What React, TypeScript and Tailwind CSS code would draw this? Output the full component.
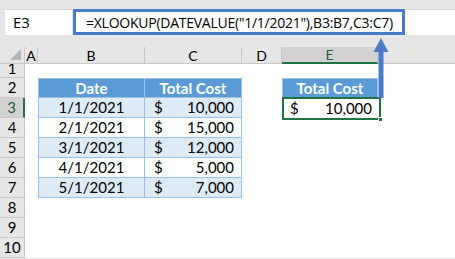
import React from "react";

const cellFont = { fontFamily: "Lato, 'Liberation Sans', sans-serif" };

const data: [string, string][] = [
  ["1/1/2021", "10,000"],
  ["2/1/2021", "15,000"],
  ["3/1/2021", "12,000"],
  ["4/1/2021", "5,000"],
  ["5/1/2021", "7,000"],
];

const rowHeights = [14, 20, 20, 20, 20, 20, 20, 20, 20, 20];

function ColHeader({ w, label, active }: { w: string; label: string; active?: boolean }) {
  return (
    <div
      className={`${w} flex h-full shrink-0 items-center justify-center border-r border-[#c9c9c9] text-[14px] ${
        active ? "border-b-2 border-b-[#217346] bg-[#d2d2d2] text-[#1d5c3a]" : "border-b border-b-[#c9c9c9] text-black"
      }`}
    >
      {label}
    </div>
  );
}

function BCell({ r }: { r: number }) {
  if (r === 2)
    return (
      <div className="flex h-full w-[107px] shrink-0 items-center justify-center border border-[#9bc2e6] bg-[#5b9bd5] text-[15px] font-bold text-white">
        Date
      </div>
    );
  if (r >= 3 && r <= 7)
    return (
      <div
        className={`flex h-full w-[107px] shrink-0 items-center justify-center border-x border-b border-[#9bc2e6] text-[15px] text-black ${
          r % 2 === 1 ? "bg-[#ddebf7]" : "bg-white"
        }`}
      >
        {data[r - 3][0]}
      </div>
    );
  return <div className="h-full w-[107px] shrink-0" />;
}

function CCell({ r }: { r: number }) {
  if (r === 2)
    return (
      <div className="flex h-full w-[97px] shrink-0 items-center justify-center border-y border-r border-[#9bc2e6] bg-[#5b9bd5] text-[15px] font-bold text-white">
        Total Cost
      </div>
    );
  if (r >= 3 && r <= 7)
    return (
      <div
        className={`flex h-full w-[97px] shrink-0 items-center justify-between border-r border-b border-[#9bc2e6] pl-[9px] pr-[7px] text-[15px] text-black ${
          r % 2 === 1 ? "bg-[#ddebf7]" : "bg-white"
        }`}
      >
        <span>$</span>
        <span>{data[r - 3][1]}</span>
      </div>
    );
  return <div className="h-full w-[97px] shrink-0" />;
}

function ECell({ r }: { r: number }) {
  if (r === 2)
    return (
      <div className="flex h-full w-[96px] shrink-0 items-center justify-center border border-[#9bc2e6] bg-[#5b9bd5] text-[15px] font-bold text-white">
        Total Cost
      </div>
    );
  if (r === 3)
    return (
      <div className="relative flex h-full w-[96px] shrink-0 items-center justify-between pl-[8px] pr-[6px] text-[15px] text-black">
        <span>$</span>
        <span>10,000</span>
        <div className="absolute -top-[1px] left-0 -right-[3px] -bottom-[2px] border-2 border-[#217346]" />
        <div className="absolute -right-[5px] -bottom-[4px] h-[5px] w-[5px] border border-white bg-[#217346]" />
      </div>
    );
  return <div className="h-full w-[96px] shrink-0" />;
}

export default function App() {
  return (
    <div className="relative h-[259px] w-[455px] overflow-hidden bg-[#e6e6e6]" style={cellFont}>
      {/* formula bar */}
      <div className="flex h-[35px] pt-[9px]">
        <div
          className="ml-[5px] flex w-[67px] items-center border-t border-[#d4d4d4] bg-white pl-[8px] text-[15px] text-black"
          style={{ fontFamily: "'Open Sans', 'Liberation Sans', sans-serif" }}
        >
          E3
        </div>
        <div className="ml-[1px] flex flex-1 border-t border-[#d4d4d4] bg-white">
          <div
            className="-mt-[1px] flex w-[332px] items-center whitespace-nowrap border-[3px] border-[#4a7bc8] pl-[10px] text-[14px] tracking-[-0.25px] text-black"
            style={{ fontFamily: "'Open Sans', 'Liberation Sans', sans-serif" }}
          >
            =XLOOKUP(DATEVALUE("1/1/2021"),B3:B7,C3:C7)
          </div>
        </div>
      </div>

      {/* column headers */}
      <div className="mt-[12px] flex h-[17px]">
        <div className="relative h-full w-[25px] shrink-0 border-r border-b border-[#c9c9c9]">
          <div className="absolute right-[3px] bottom-[3px] h-0 w-0 border-b-[11px] border-l-[11px] border-b-[#b4b4b4] border-l-transparent" />
        </div>
        <ColHeader w="w-[13px]" label="A" />
        <ColHeader w="w-[107px]" label="B" />
        <ColHeader w="w-[97px]" label="C" />
        <ColHeader w="w-[40px]" label="D" />
        <ColHeader w="w-[96px]" label="E" active />
        <div className="relative h-full flex-1 border-b border-[#c9c9c9]">
          <div className="absolute left-[32px] top-[2px] h-[9px] w-[1px] bg-[#f3ea9a]" />
        </div>
      </div>

      {/* rows */}
      <div className="flex flex-col">
        {rowHeights.map((h, i) => {
          const r = i + 1;
          return (
            <div key={r} className="flex" style={{ height: h }}>
              <div
                className={`flex h-full w-[25px] shrink-0 items-center justify-center border-b border-[#c9c9c9] text-[15px] ${
                  r === 3 ? "border-r-2 border-r-[#217346] bg-[#d2d2d2] text-[#1d5c3a]" : "border-r border-r-[#c9c9c9] text-black"
                }`}
              >
                {r === 1 ? <span className="-mt-[4px]">{r}</span> : r}
              </div>
              <div className="flex h-full flex-1 bg-white">
                <div className="h-full w-[13px] shrink-0" />
                <BCell r={r} />
                <CCell r={r} />
                <div className="h-full w-[40px] shrink-0" />
                <ECell r={r} />
                <div className="h-full flex-1" />
              </div>
            </div>
          );
        })}
      </div>

      {/* annotation arrow */}
      <svg className="absolute left-[372px] top-[37px]" width="18" height="61" viewBox="0 0 18 61">
        <rect x="6.5" y="12" width="5" height="49" fill="#4a7bc8" />
        <polygon points="9,1 1.5,15 16.5,15" fill="#4a7bc8" />
      </svg>
    </div>
  );
}
